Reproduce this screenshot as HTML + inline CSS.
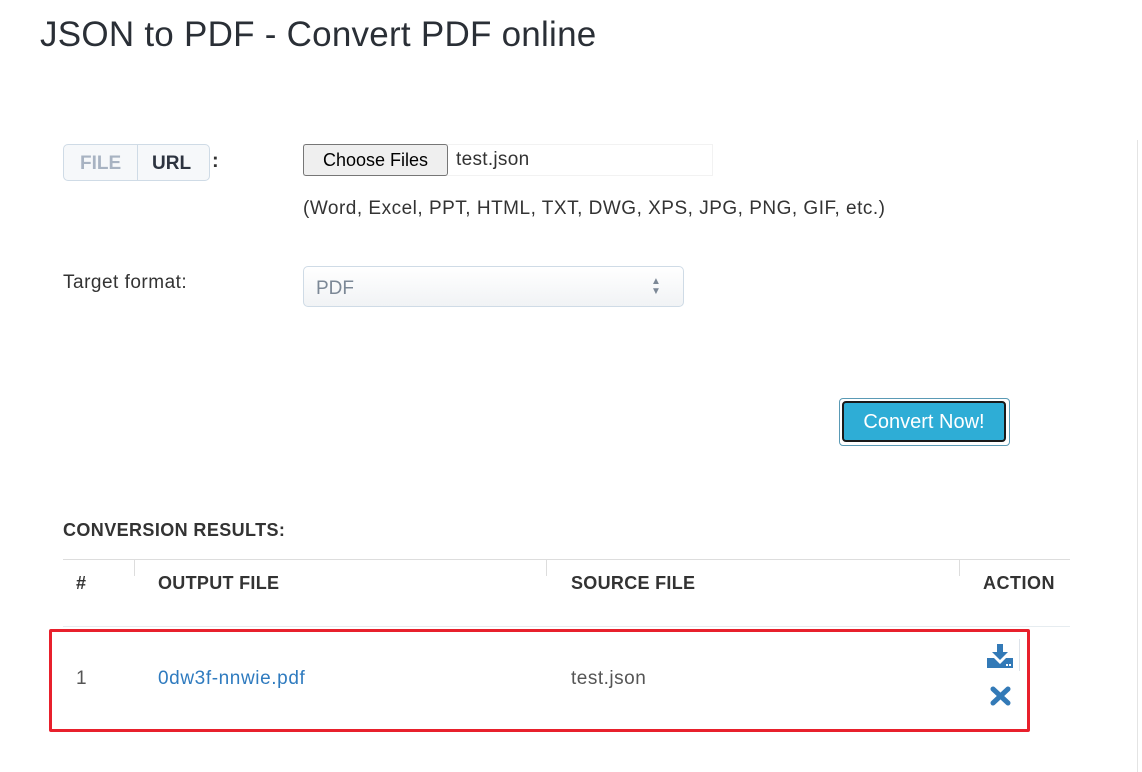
<!DOCTYPE html>
<html><head><style>
body{margin:0;width:1142px;height:772px;background:#fff;position:relative;overflow:hidden;font-family:"Liberation Sans",sans-serif;color:#333}
.a{position:absolute;white-space:nowrap}
</style></head><body>
<div class="a" style="left:40px;top:15px;font-size:35px;letter-spacing:0.25px;color:#2a2f36">JSON to PDF - Convert PDF online</div>
<div class="a" style="left:1137px;top:140px;width:1px;height:632px;background:#e4e4e4"></div>

<div class="a" style="left:63px;top:144px;width:145px;height:35px;border:1px solid #cfdbe6;border-radius:5px;background:#f6f8fa"></div>
<div class="a" style="left:137px;top:145px;width:1px;height:35px;background:#cfdbe6"></div>
<div class="a" style="left:80px;top:153px;font-size:19px;font-weight:bold;color:#a8b3c2">FILE</div>
<div class="a" style="left:152px;top:153px;font-size:19px;font-weight:bold;color:#2d3440">URL</div>
<div class="a" style="left:212px;top:150px;font-size:20px;font-weight:bold">:</div>

<div class="a" style="left:303px;top:144px;width:408px;height:30px;border:1px solid #f2f2f2"></div>
<div class="a" style="left:303px;top:144px;width:143px;height:30px;border:1px solid #767676;border-radius:3px;background:#efefef;font-size:18px;color:#000;line-height:30px;text-align:center">Choose Files</div>
<div class="a" style="left:456px;top:149px;font-size:19px;color:#333;letter-spacing:0.3px">test.json</div>
<div class="a" style="left:303px;top:198px;font-size:19px;color:#333;letter-spacing:0.5px">(Word, Excel, PPT, HTML, TXT, DWG, XPS, JPG, PNG, GIF, etc.)</div>

<div class="a" style="left:63px;top:272px;font-size:19px;color:#333;letter-spacing:0.5px">Target format:</div>
<div class="a" style="left:303px;top:266px;width:379px;height:39px;border:1px solid #cfdbe6;border-radius:5px;background:linear-gradient(#fff,#f1f3f5)"></div>
<div class="a" style="left:316px;top:278px;font-size:19px;color:#7c8896">PDF</div>
<div class="a" style="left:651px;top:277px;font-size:10px;line-height:10px;color:#7c8896">▲<br>▼</div>

<div class="a" style="left:839px;top:398px;width:169px;height:46px;border:1px solid #5a9ab5;border-radius:4px"></div>
<div class="a" style="left:842px;top:401px;width:160px;height:37px;border:2px solid #1a1a1a;border-radius:4px;background:#2eadd6;color:#fff;font-size:20px;line-height:39px;text-align:center">Convert Now!</div>

<div class="a" style="left:63px;top:520px;font-size:18px;font-weight:bold;color:#333;letter-spacing:0.4px">CONVERSION RESULTS:</div>
<div class="a" style="left:63px;top:559px;width:1007px;height:1px;background:#ddd"></div>
<div class="a" style="left:134px;top:560px;width:1px;height:16px;background:#ddd"></div>
<div class="a" style="left:546px;top:560px;width:1px;height:16px;background:#ddd"></div>
<div class="a" style="left:959px;top:560px;width:1px;height:16px;background:#ddd"></div>
<div class="a" style="left:76px;top:573px;font-size:18px;font-weight:bold">#</div>
<div class="a" style="left:158px;top:573px;font-size:18px;font-weight:bold;letter-spacing:0.3px">OUTPUT FILE</div>
<div class="a" style="left:571px;top:573px;font-size:18px;font-weight:bold;letter-spacing:0.3px">SOURCE FILE</div>
<div class="a" style="left:983px;top:573px;font-size:18px;font-weight:bold;letter-spacing:0.5px">ACTION</div>
<div class="a" style="left:63px;top:626px;width:1007px;height:1px;background:#e6ecf0"></div>

<div class="a" style="left:49px;top:629px;width:975px;height:97px;border:3px solid #e8202c;border-radius:2px"></div>
<div class="a" style="left:76px;top:668px;font-size:19px;color:#555">1</div>
<div class="a" style="left:158px;top:668px;font-size:19px;color:#2f7bbf;letter-spacing:0.6px">0dw3f-nnwie.pdf</div>
<div class="a" style="left:571px;top:668px;font-size:19px;color:#555;letter-spacing:0.5px">test.json</div>
<div class="a" style="left:1019px;top:639px;width:1px;height:32px;background:#dde3ea"></div>
<svg class="a" style="left:987px;top:644px" width="26" height="24" viewBox="0 0 26 24">
<path d="M10 0h6v8h5l-8 8-8-8h5z" fill="#337ab7"/>
<path d="M0 14h7l6 6 6-6h7v10H0z" fill="#337ab7"/>
<rect x="19" y="20" width="2" height="2" fill="#fff"/><rect x="22" y="20" width="2" height="2" fill="#fff"/>
</svg>
<svg class="a" style="left:990px;top:686px" width="21" height="20" viewBox="0 0 21 20">
<path d="M3 3L18 17M18 3L3 17" stroke="#337ab7" stroke-width="5" stroke-linecap="round"/>
</svg>
</body></html>
